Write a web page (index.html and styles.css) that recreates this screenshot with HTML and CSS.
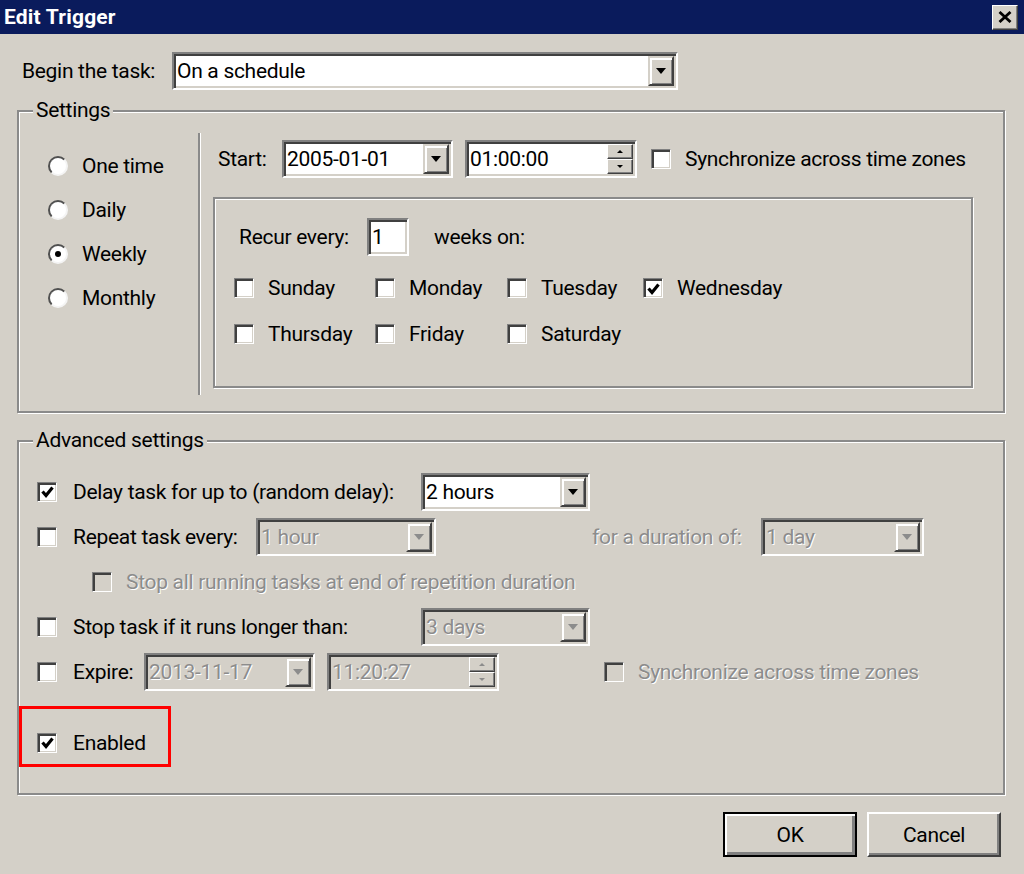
FILE: index.html
```html
<!DOCTYPE html>
<html>
<head>
    <title>Edit Trigger</title>
    <link rel="stylesheet" href="styles.css">
</head>
<body>
<div class="window">
    <div class="titlebar">
        <span class="title">Edit Trigger</span>
        <span class="close-btn">
            <svg width="14" height="12" viewBox="0 0 14 12"><path d="M1.5 1 L12.5 11 M12.5 1 L1.5 11" stroke="#000" stroke-width="2.8" fill="none"/></svg>
        </span>
    </div>

    <div class="dialog">
        <div class="begin-row">
            <span class="begin-label">Begin the task:</span>
            <div class="combo combo-begin">
                <span class="combo-text">On a schedule</span>
                <span class="combo-btn"><span class="arrow"></span></span>
            </div>
        </div>

        <div class="group group-settings">
            <div class="group-title">Settings</div>
            <div class="settings-inner">
                <div class="radios">
                    <div class="radio-row"><span class="radio"></span>One time</div>
                    <div class="radio-row"><span class="radio"></span>Daily</div>
                    <div class="radio-row"><span class="radio checked"></span>Weekly</div>
                    <div class="radio-row"><span class="radio"></span>Monthly</div>
                </div>
                <div class="vsep"></div>
                <div class="schedule">
                    <div class="start-row">
                        <span class="start-label">Start:</span>
                        <div class="combo combo-date">
                            <span class="combo-text">2005-01-01</span>
                            <span class="combo-btn"><span class="arrow"></span></span>
                        </div>
                        <div class="combo spin-time">
                            <span class="combo-text">01:00:00</span>
                            <span class="spin-btns">
                                <span class="spin-btn"><span class="arrow-up"></span></span>
                                <span class="spin-btn"><span class="arrow-down"></span></span>
                            </span>
                        </div>
                        <span class="check-item sync"><span class="check"></span>Synchronize across time zones</span>
                    </div>
                    <div class="recur-box">
                        <div class="recur-row">
                            <span class="recur-label">Recur every:</span>
                            <span class="textbox">1</span>
                            <span class="weeks-label">weeks on:</span>
                        </div>
                        <div class="days">
                            <span class="check-item"><span class="check"></span>Sunday</span>
                            <span class="check-item"><span class="check"></span>Monday</span>
                            <span class="check-item"><span class="check"></span>Tuesday</span>
                            <span class="check-item"><span class="check"><svg class="tick" width="13" height="12" viewBox="0 0 13 12"><path d="M1.5 5.5 L5 9.5 L11.5 1.5" stroke="#000" stroke-width="3.2" fill="none"/></svg></span>Wednesday</span>
                            <span class="check-item"><span class="check"></span>Thursday</span>
                            <span class="check-item"><span class="check"></span>Friday</span>
                            <span class="check-item"><span class="check"></span>Saturday</span>
                        </div>
                    </div>
                </div>
            </div>
        </div>

        <div class="group group-advanced">
            <div class="group-title">Advanced settings</div>
            <div class="adv-rows">
                <div class="adv-row">
                    <span class="check-item"><span class="check"><svg class="tick" width="13" height="12" viewBox="0 0 13 12"><path d="M1.5 5.5 L5 9.5 L11.5 1.5" stroke="#000" stroke-width="3.2" fill="none"/></svg></span><span class="adv-label w-long">Delay task for up to (random delay):</span></span>
                    <div class="combo combo-mid">
                        <span class="combo-text">2 hours</span>
                        <span class="combo-btn"><span class="arrow"></span></span>
                    </div>
                </div>
                <div class="adv-row">
                    <span class="check-item"><span class="check"></span><span class="adv-label w-repeat">Repeat task every:</span></span>
                    <div class="combo combo-repeat disabled">
                        <span class="combo-text">1 hour</span>
                        <span class="combo-btn"><span class="arrow"></span></span>
                    </div>
                    <span class="duration-label disabled-text">for a duration of:</span>
                    <div class="combo combo-duration disabled">
                        <span class="combo-text">1 day</span>
                        <span class="combo-btn"><span class="arrow"></span></span>
                    </div>
                </div>
                <div class="adv-row indent">
                    <span class="check-item disabled-text"><span class="check off"></span>Stop all running tasks at end of repetition duration</span>
                </div>
                <div class="adv-row">
                    <span class="check-item"><span class="check"></span><span class="adv-label w-long">Stop task if it runs longer than:</span></span>
                    <div class="combo combo-mid disabled">
                        <span class="combo-text">3 days</span>
                        <span class="combo-btn"><span class="arrow"></span></span>
                    </div>
                </div>
                <div class="adv-row">
                    <span class="check-item"><span class="check"></span><span class="adv-label w-expire">Expire:</span></span>
                    <div class="combo combo-date disabled">
                        <span class="combo-text">2013-11-17</span>
                        <span class="combo-btn"><span class="arrow"></span></span>
                    </div>
                    <div class="combo spin-time disabled">
                        <span class="combo-text">11:20:27</span>
                        <span class="spin-btns">
                            <span class="spin-btn"><span class="arrow-up"></span></span>
                            <span class="spin-btn"><span class="arrow-down"></span></span>
                        </span>
                    </div>
                    <span class="check-item expire-sync disabled-text"><span class="check off"></span>Synchronize across time zones</span>
                </div>
                <div class="adv-row enabled-row">
                    <span class="check-item"><span class="check"><svg class="tick" width="13" height="12" viewBox="0 0 13 12"><path d="M1.5 5.5 L5 9.5 L11.5 1.5" stroke="#000" stroke-width="3.2" fill="none"/></svg></span>Enabled</span>
                    <span class="highlight"></span>
                </div>
            </div>
        </div>

        <div class="buttons">
            <span class="btn btn-default">OK</span>
            <span class="btn">Cancel</span>
        </div>
    </div>
</div>
</body>
</html>
```

FILE: styles.css
```css
* {
    box-sizing: border-box;
}
body {
    margin: 0;
    font-family: Roboto, "Liberation Sans", sans-serif;
    font-size: 21px;
    letter-spacing: -0.3px;
    line-height: 26px;
    color: #000;
}
.window {
    width: 1024px;
    height: 874px;
    background: #d4d0c8;
    overflow: hidden;
}
.titlebar {
    height: 34px;
    background: #0a1b5c;
    display: flex;
    align-items: center;
    justify-content: space-between;
    padding: 0 6px 0 4px;
}
.title {
    color: #fff;
    font-weight: bold;
    letter-spacing: 0.2px;
}
.close-btn {
    width: 26px;
    height: 25px;
    background: #d4d0c8;
    border: 1px solid;
    border-color: #fff #404040 #404040 #fff;
    box-shadow: inset -1px -1px 0 #808080;
    display: flex;
    align-items: center;
    justify-content: center;
}

.dialog {
    padding: 18px 19px 0 17px;
}
.begin-row {
    display: flex;
    align-items: center;
    height: 38px;
    padding-left: 5px;
}
.begin-label {
    width: 150px;
}

/* sunken combo / text fields */
.combo, .textbox {
    display: flex;
    align-items: center;
    height: 38px;
    background: #fff;
    border: 2px solid;
    border-color: #808080 #fff #fff #808080;
    box-shadow: inset 2px 2px 0 #404040, inset -2px -2px 0 #d4d0c8;
    padding: 2px;
    white-space: nowrap;
}
.combo-text {
    flex: 1;
    padding-left: 1px;
    overflow: hidden;
}
.combo-btn {
    width: 26px;
    height: 30px;
    background: #d4d0c8;
    border: 2px solid;
    border-color: #d4d0c8 #404040 #404040 #d4d0c8;
    box-shadow: inset 2px 2px 0 #fff, inset -1px -1px 0 #808080;
    display: flex;
    align-items: center;
    justify-content: center;
}
.arrow {
    border-left: 5px solid transparent;
    border-right: 5px solid transparent;
    border-top: 6px solid #000;
}
.spin-btns {
    display: flex;
    flex-direction: column;
    height: 30px;
}
.spin-btn {
    width: 26px;
    height: 15px;
    background: #d4d0c8;
    border: 1px solid;
    border-color: #fff #404040 #404040 #fff;
    box-shadow: inset -1px -1px 0 #808080;
    display: flex;
    align-items: center;
    justify-content: center;
}
.arrow-up {
    border-left: 3px solid transparent;
    border-right: 3px solid transparent;
    border-bottom: 3px solid #000;
}
.arrow-down {
    border-left: 3px solid transparent;
    border-right: 3px solid transparent;
    border-top: 3px solid #000;
}
.combo.disabled {
    background: #d4d0c8;
    color: #8c8c8c;
    text-shadow: 1px 1px 0 #fff;
}
.combo.disabled .arrow {
    border-top-color: #8c8c8c;
}
.combo.disabled .arrow-up {
    border-bottom-color: #8c8c8c;
}
.combo.disabled .arrow-down {
    border-top-color: #8c8c8c;
}
.disabled-text {
    color: #8c8c8c;
    text-shadow: 1px 1px 0 #fff;
}

.combo-begin {
    width: 506px;
}
.combo-date {
    width: 171px;
}
.spin-time {
    width: 172px;
    margin-left: 12px;
}
.combo-mid {
    width: 169px;
}
.combo-repeat {
    width: 180px;
}
.combo-duration {
    width: 163px;
}

/* etched group boxes */
.group {
    border: 2px solid #8a8a8a;
    box-shadow: inset 1px 1px 0 #fff, 1px 1px 0 #fff;
}
.group-title {
    width: max-content;
    margin: -15px 0 0 14px;
    padding: 0 3px;
    background: #d4d0c8;
}
.group-settings {
    margin-top: 20px;
    padding-bottom: 16px;
}
.settings-inner {
    display: flex;
    margin-top: 10px;
    height: 262px;
}
.radios {
    width: 179px;
    padding: 11px 0 0 29px;
}
.radio-row {
    display: flex;
    align-items: center;
    gap: 14px;
    height: 44px;
}
.radio {
    width: 20px;
    height: 20px;
    border-radius: 50%;
    background: #fff;
    border: 2px solid;
    border-color: #505050 #f4f4f4 #f4f4f4 #505050;
    display: flex;
    align-items: center;
    justify-content: center;
}
.radio.checked::after {
    content: "";
    width: 6px;
    height: 6px;
    border-radius: 50%;
    background: #000;
}
.vsep {
    width: 3px;
    border-left: 2px solid #8a8a8a;
    border-right: 1px solid #fff;
}
.schedule {
    margin-left: 12px;
    padding-top: 7px;
}
.start-row {
    display: flex;
    align-items: center;
    height: 38px;
    padding-left: 5px;
}
.start-label {
    width: 64px;
}
.sync {
    margin-left: 14px;
}

/* checkboxes */
.check-item {
    display: flex;
    align-items: center;
    gap: 14px;
    white-space: nowrap;
}
.check {
    width: 20px;
    height: 20px;
    flex: none;
    background: #fff;
    border: 1px solid;
    border-color: #808080 #fff #fff #808080;
    box-shadow: inset 2px 2px 0 #404040, inset -1px -1px 0 #d4d0c8;
    display: flex;
    align-items: center;
    justify-content: center;
    padding: 1px 0 0 1px;
}
.check.off {
    background: #d4d0c8;
}

.recur-box {
    width: 760px;
    margin-top: 19px;
    border: 2px solid #8a8a8a;
    box-shadow: inset 1px 1px 0 #fff, 1px 1px 0 #fff;
    padding: 19px 0 29px 19px;
}
.recur-row {
    display: flex;
    align-items: center;
    height: 38px;
    padding-left: 5px;
}
.recur-label {
    width: 128px;
}
.textbox {
    width: 42px;
    padding-left: 3px;
}
.weeks-label {
    margin-left: 25px;
}
.days {
    display: grid;
    grid-template-columns: 141px 132px 136px auto;
    grid-auto-rows: 46px;
    margin-top: 9px;
}

.group-advanced {
    margin-top: 27px;
    padding-bottom: 28px;
}
.adv-rows {
    margin-top: 16px;
}
.adv-row {
    display: flex;
    align-items: center;
    height: 45px;
    padding-left: 18px;
}
.adv-row > .check-item:first-child {
    gap: 16px;
}
.adv-row.indent {
    padding-left: 73px;
}
.adv-row.indent > .check-item:first-child {
    gap: 14px;
}
.w-long {
    width: 348px;
}
.w-repeat {
    width: 183px;
}
.w-expire {
    width: 71px;
}
.duration-label {
    margin-left: 156px;
    width: 169px;
}
.expire-sync {
    margin-left: 105px;
}
.enabled-row {
    position: relative;
    margin-top: 26px;
}
.highlight {
    position: absolute;
    left: 0;
    top: -14px;
    width: 152px;
    height: 61px;
    border: 3px solid #f00;
}

.buttons {
    display: flex;
    justify-content: flex-end;
    gap: 10px;
    margin-top: 17px;
    padding-right: 4px;
}
.btn {
    width: 134px;
    height: 45px;
    display: flex;
    align-items: center;
    justify-content: center;
    background: #d4d0c8;
    border: 2px solid;
    border-color: #fff #404040 #404040 #fff;
    box-shadow: inset -2px -2px 0 #808080;
}
.btn-default {
    border: 2px solid #000;
    box-shadow: inset 2px 2px 0 #fff, inset -3px -3px 0 #808080;
}
```
